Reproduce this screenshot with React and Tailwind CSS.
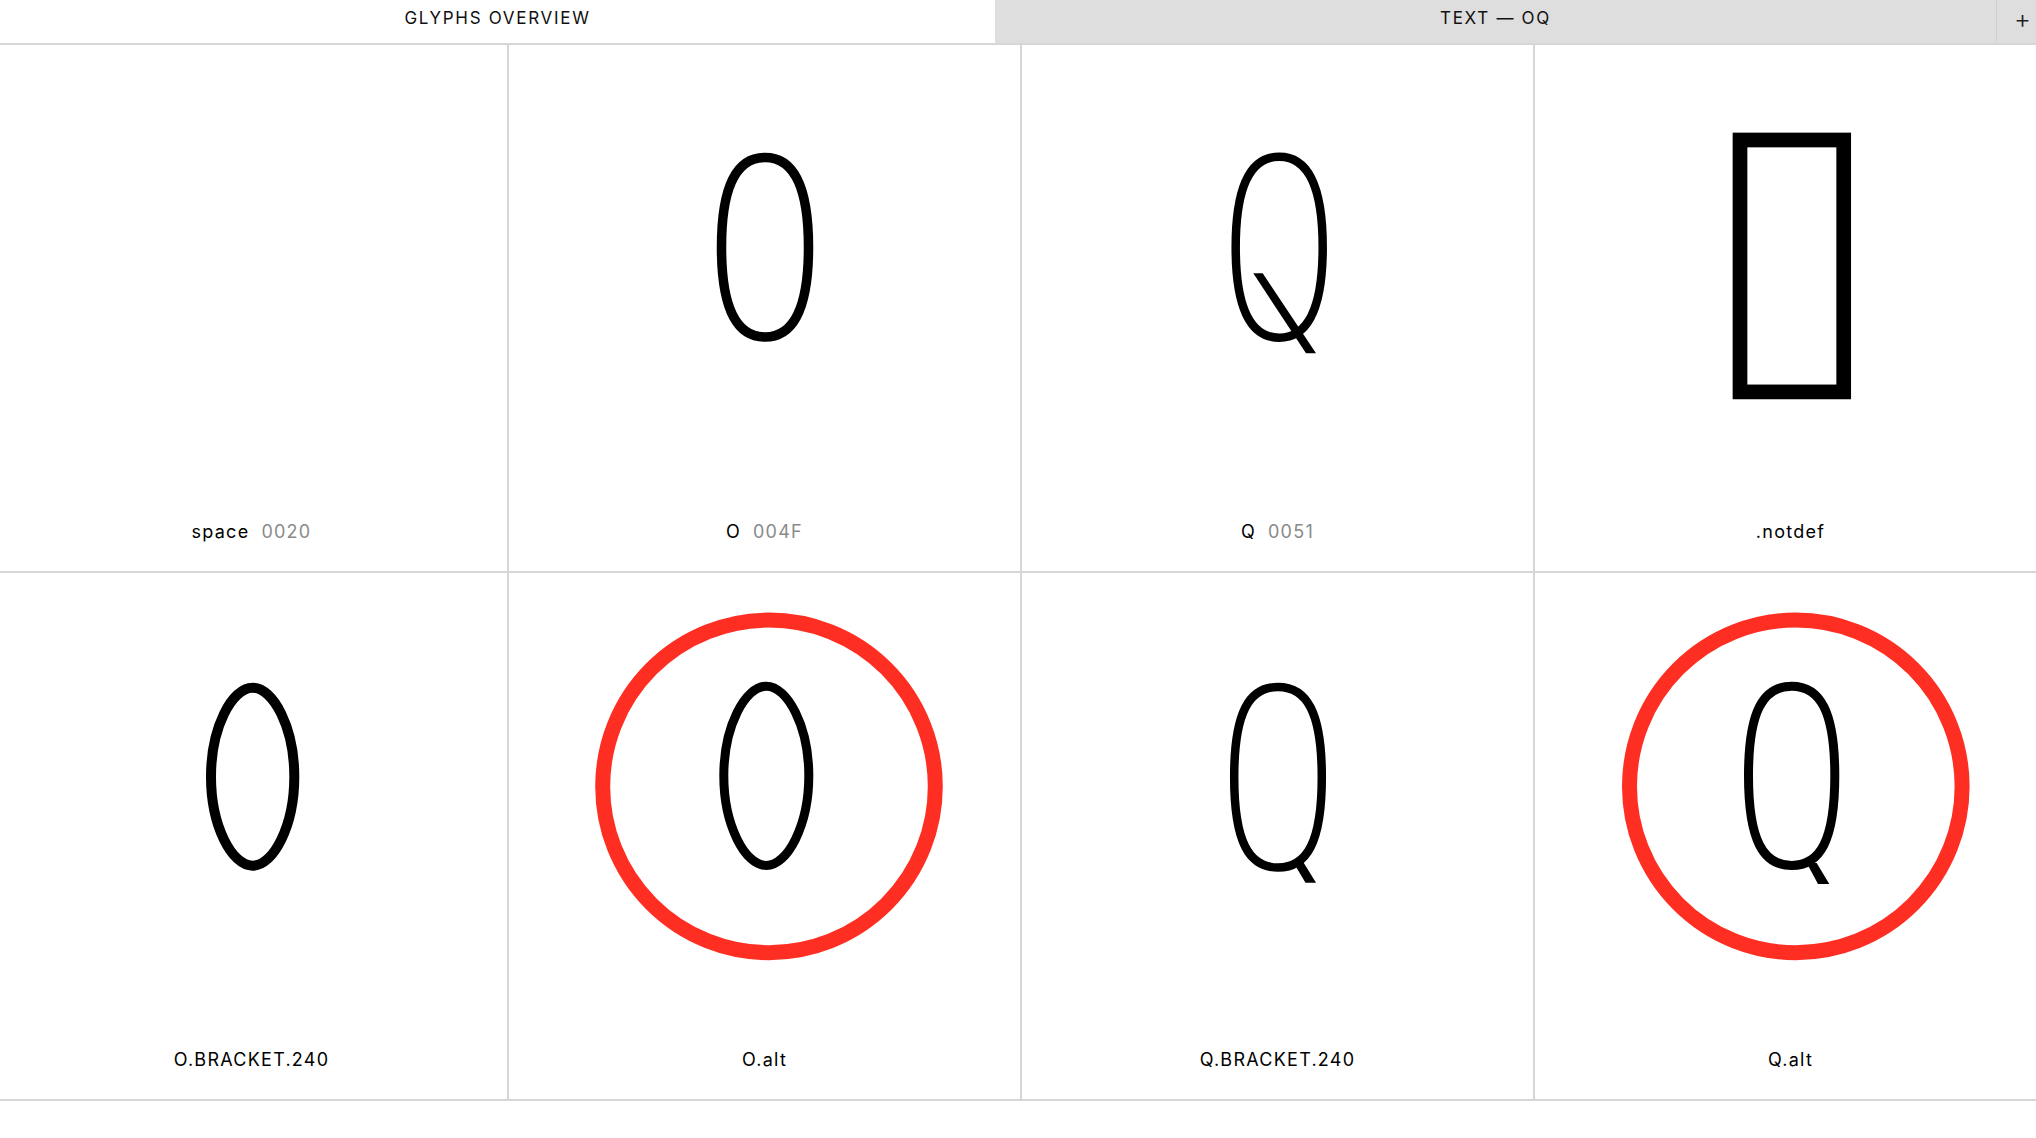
import React from "react";

const RED = "#FF2E22";

function stadium(l, r, t, b, k = 0.62) {
  const cx = (l + r) / 2;
  const m = (t + b) / 2;
  const hw = (r - l) / 2;
  const hh = (b - t) / 2;
  const kx = hw * k;
  const ky = hh * 0.72;
  return `M${cx},${t} C${cx + kx},${t} ${r},${m - ky} ${r},${m} C${r},${m + ky} ${cx + kx},${b} ${cx},${b} C${cx - kx},${b} ${l},${m + ky} ${l},${m} C${l},${m - ky} ${cx - kx},${t} ${cx},${t} Z`;
}

function oval(l, r, t, b) {
  const cx = (l + r) / 2;
  const m = (t + b) / 2;
  const hw = (r - l) / 2;
  const hh = (b - t) / 2;
  return `M${cx},${t} C${cx + hw * 0.5},${t} ${r},${m - hh * 0.55} ${r},${m} C${r},${m + hh * 0.55} ${cx + hw * 0.5},${b} ${cx},${b} C${cx - hw * 0.5},${b} ${l},${m + hh * 0.55} ${l},${m} C${l},${m - hh * 0.55} ${cx - hw * 0.5},${t} ${cx},${t} Z`;
}

function Glyph({ children }) {
  return (
    <svg width="511" height="475" viewBox="0 0 511 475" className="block shrink-0">
      <g transform="translate(-1,-2)">{children}</g>
    </svg>
  );
}

const glyphs = [
  { name: "space", code: "0020", draw: null },
  {
    name: "O",
    code: "004F",
    draw: (
      <path d={stadium(213.5, 300.5, 114.5, 294)} fill="none" stroke="#000" strokeWidth="9.5" />
    ),
  },
  {
    name: "Q",
    code: "0051",
    draw: (
      <g>
        <path d={stadium(214.7, 301.7, 113.7, 294.7)} fill="none" stroke="#000" strokeWidth="8.5" />
        <polygon points="232.3,230.3 241.7,230.3 295,310.3 285,310.3" fill="#000" />
      </g>
    ),
  },
  {
    name: ".notdef",
    code: null,
    draw: <rect x="206" y="97" width="103.7" height="251.9" fill="none" stroke="#000" strokeWidth="14.7" />,
  },
  {
    name: "O.BRACKET.240",
    code: null,
    draw: <path d={oval(216, 299.3, 116.7, 294.7)} fill="none" stroke="#000" strokeWidth="10" />,
  },
  {
    name: "O.alt",
    code: null,
    draw: (
      <g>
        <circle cx="261" cy="215.4" r="166.3" fill="none" stroke={RED} strokeWidth="15" />
        <path d={oval(215.8, 300.8, 115.2, 294.5)} fill="none" stroke="#000" strokeWidth="9" />
      </g>
    ),
  },
  {
    name: "Q.BRACKET.240",
    code: null,
    draw: (
      <g>
        <path d={stadium(213.2, 300.8, 116, 296.5, 0.66)} fill="none" stroke="#000" strokeWidth="8.5" />
        <polygon points="271,289 281,289 295,311.7 284.5,311.7" fill="#000" />
      </g>
    ),
  },
  {
    name: "Q.alt",
    code: null,
    draw: (
      <g>
        <circle cx="261.8" cy="215.4" r="166.3" fill="none" stroke={RED} strokeWidth="15" />
        <path d={stadium(214.5, 300.8, 115.2, 294.5, 0.66)} fill="none" stroke="#000" strokeWidth="9" />
        <polygon points="272.7,292 282.7,292 295.3,313 284,313" fill="#000" />
      </g>
    ),
  },
];

export default function App() {
  return (
    <div
      className="w-[2036px] h-[1138px] bg-white overflow-hidden"
      style={{ fontFamily: "Inter, 'Noto Sans', 'Liberation Sans', sans-serif" }}
    >
      <div className="flex h-[45px] border-b-2 border-[#d6d6d6] text-[17px] tracking-[0.1em] text-[#111]">
        <div className="w-[995px] bg-white flex items-center justify-center pb-[5px]">GLYPHS OVERVIEW</div>
        <div className="flex-1 bg-[#dedede] flex items-center justify-center pb-[5px]">TEXT — OQ</div>
        <div className="w-[40px] bg-[#dedede] border-l border-[#cfcfcf] flex items-center justify-end pr-[5px] pb-[6px] text-[26px] font-light tracking-normal text-[#222]">
          +
        </div>
      </div>
      <div className="-ml-[4px] grid grid-cols-[repeat(4,513px)]">
        {glyphs.map((g) => (
          <div key={g.name} className="h-[528px] border-r-2 border-b-2 border-[#d6d6d6] flex flex-col">
            <Glyph>{g.draw}</Glyph>
            <div className="h-[24px] flex items-center justify-center gap-[12px] text-[18px] tracking-[0.07em] leading-none">
              <span className="text-black">{g.name}</span>
              {g.code && <span className="text-[#8a8a8a]">{g.code}</span>}
            </div>
          </div>
        ))}
      </div>
    </div>
  );
}
